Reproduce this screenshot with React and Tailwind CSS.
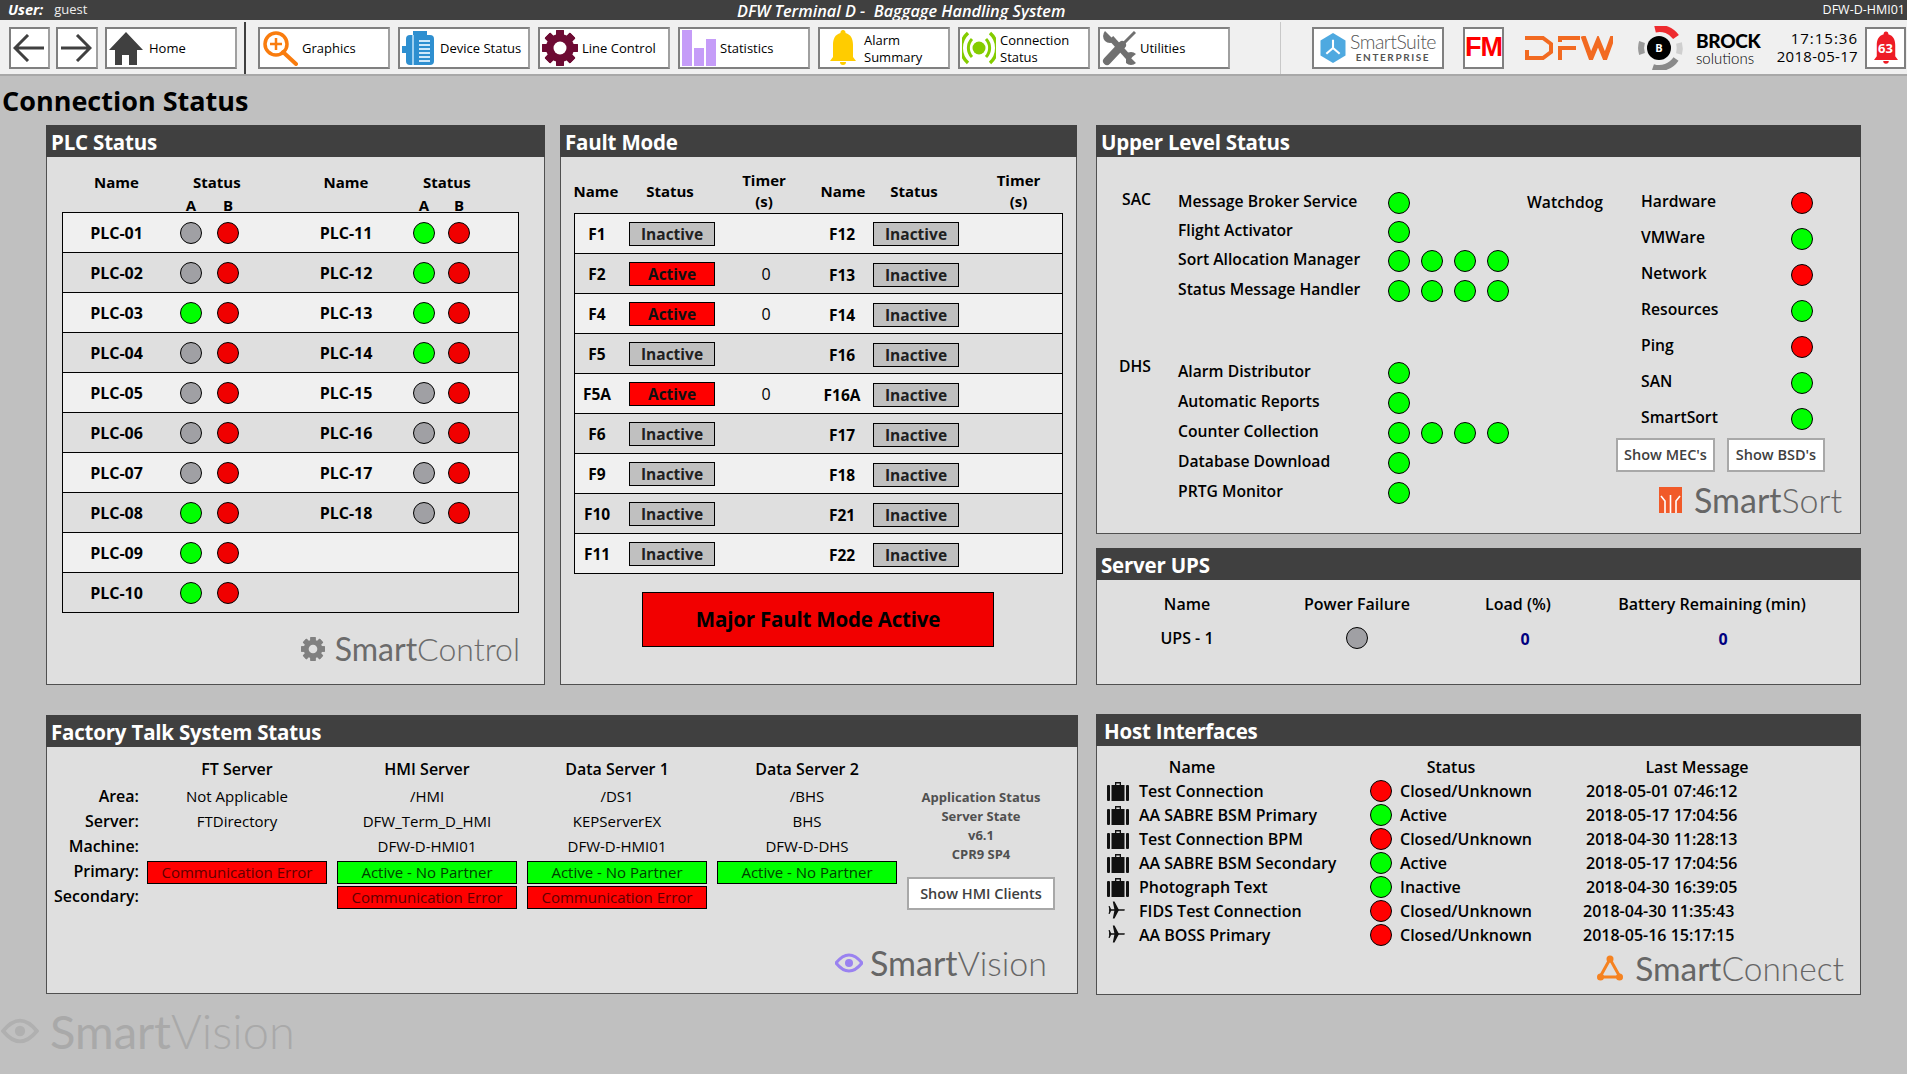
const font = "font-['Open_Sans','Noto_Sans',sans-serif]";

function Dot({ c, className = "" }) {
  const fill = c === "g" ? "bg-[#00ff00]" : c === "r" ? "bg-[#ff0000]" : c === "d" ? "bg-[#f00000]" : "bg-[#a0a0a4]";
  return <span className={`block w-[22px] h-[22px] rounded-full border border-black shrink-0 ${fill} ${className}`} />;
}

function Panel({ title, className = "", titleClass = "pl-[5px]", children }) {
  return (
    <section className={`flex flex-col bg-[#dfdfdf] border border-t-0 border-[#505050] ${className}`}>
      <h2 className={`h-[32px] shrink-0 -mx-px bg-[#404040] text-white text-[20.5px] leading-[34px] font-bold tracking-[-0.2px] ${titleClass}`}>{title}</h2>
      <div className="flex-1 flex flex-col min-h-0">{children}</div>
    </section>
  );
}

function ToolBtn({ icon, label, w = "w-[132px]" }) {
  return (
    <button className={`${w} h-[42px] shrink-0 flex items-center gap-[4px] bg-white border-2 border-[#808080] border-r-[#a0a0a0] px-[2px] text-[13px] leading-[17px] text-black text-left font-normal`}>
      {icon}
      {label && <span className="whitespace-pre-line pt-[2px]">{label}</span>}
    </button>
  );
}

function Btn({ className = "", children }) {
  return (
    <button className={`bg-white border-2 border-[#a8a8a8] text-[14.5px] font-semibold text-[#404040] flex items-center justify-center whitespace-nowrap ${className}`}>{children}</button>
  );
}

const HomeIcon = () => (
  <svg width="34" height="34" viewBox="0 0 34 34" className="shrink-0 mr-[2px]"><path d="M17 1 L34 19 H28 V34 H20 V24 H13 V34 H6 V19 H0 Z" fill="#404040" /></svg>
);
const GraphicsIcon = () => (
  <svg width="36" height="36" viewBox="0 0 36 36" className="shrink-0"><circle cx="14" cy="14" r="11" fill="none" stroke="#f97c0e" strokeWidth="3.5" /><path d="M21 22 L34 34" stroke="#f97c0e" strokeWidth="4" strokeLinecap="round" /><path d="M14 8 V20 M8 14 H20" stroke="#f97c0e" strokeWidth="2.5" /></svg>
);
const DeviceIcon = () => (
  <svg width="34" height="36" viewBox="0 0 34 36" className="shrink-0">
    <rect x="11" y="1" width="14" height="5" fill="#2e8fd0" /><rect x="4" y="5" width="28" height="30" rx="4" fill="#2e8fd0" /><rect x="0" y="16" width="4" height="7" fill="#2e8fd0" />
    <rect x="10" y="5" width="2" height="30" fill="#9fd0f0" />
    {[10, 14, 18, 22, 26, 30].map((y) => <rect key={y} x="17" y={y} width="11" height="2" fill="#cfe8fa" />)}
  </svg>
);
const GearIcon = ({ color = "#6d0a33", size = 36, hole = "#fff" }) => (
  <svg width={size} height={size} viewBox="0 0 36 36" className="shrink-0">
    <g fill={color}>{[0, 45, 90, 135, 180, 225, 270, 315].map((a) => <rect key={a} x="14" y="0" width="8" height="36" rx="1" transform={`rotate(${a} 18 18)`} />)}<circle cx="18" cy="18" r="14" /></g>
    <circle cx="18" cy="18" r="6.5" fill={hole} />
  </svg>
);
const StatsIcon = () => (
  <svg width="34" height="36" viewBox="0 0 34 36" className="shrink-0"><g fill="#c59cf8"><rect x="0" y="0" width="10" height="36" /><rect x="12" y="18" width="10" height="18" /><rect x="24" y="9" width="10" height="27" /></g></svg>
);
const BellIcon = ({ color = "#ffcc00", w = 26, h = 36 }) => (
  <svg width={w} height={h} viewBox="0 0 26 36" className="shrink-0"><path d="M13 0 a2.5 2.5 0 0 1 2.5 3 C21 4.5 23 9 23 15 V27 L26 31 H0 L3 27 V15 C3 9 5 4.5 10.5 3 A2.5 2.5 0 0 1 13 0 Z M10 32 H16 A3 3 0 0 1 10 32 Z" fill={color} /></svg>
);
const SignalIcon = () => (
  <svg width="34" height="34" viewBox="0 0 34 34" className="shrink-0" fill="none" stroke="#84cc00" strokeWidth="3"><circle cx="17" cy="17" r="6.5" fill="#84cc00" stroke="none" /><path d="M10 8 A13 13 0 0 0 10 26 M24 8 A13 13 0 0 1 24 26" /><path d="M6 2 A20 20 0 0 0 6 32 M28 2 A20 20 0 0 1 28 32" strokeWidth="3.5" /></svg>
);
const ToolsIcon = () => (
  <svg width="34" height="36" viewBox="0 0 34 36" className="shrink-0" fill="none" stroke="#707070">
    <path d="M33 2 L22 13" strokeWidth="3" />
    <path d="M20 15 L5 31" strokeWidth="8" strokeLinecap="round" />
    <path d="M9 8 L28 29" strokeWidth="6" />
    <path d="M3 1 A7.5 7.5 0 0 0 3 11 A7 7 0 0 0 13 11 L8 6 Z" fill="#707070" stroke="none" />
    <path d="M24 33 A7 7 0 0 0 34 33 L29 28 L34 24 A7.5 7.5 0 0 0 24 24 Z" fill="#707070" stroke="none" />
  </svg>
);
const ArrowIcon = ({ flip }) => (
  <svg width="32" height="28" viewBox="0 0 32 28" className={flip ? "-scale-x-100" : ""} fill="none" stroke="#404040" strokeWidth="3"><path d="M31 14 H2 M15 1 L2 14 L15 27" /></svg>
);
const Case = () => (
  <svg width="22" height="20" viewBox="0 0 22 20" className="shrink-0" fill="#111"><path d="M8 4 V1 H14 V4 H12.7 V2.5 H9.3 V4 Z" /><rect x="0" y="4" width="3" height="16" rx="1" /><rect x="4.5" y="4" width="13" height="16" /><rect x="19" y="4" width="3" height="16" rx="1" /></svg>
);
const PlaneIcon = () => (
  <svg width="18" height="18" viewBox="0 0 18 18" className="shrink-0 -mt-[2px] ml-[1px]" fill="#111"><path d="M1 8.3 H16 Q18 9 16 9.7 H1 Z" /><path d="M11 9 L6.5 0.5 H4.8 L6.5 9 L4.8 17.5 H6.5 Z" /><path d="M3.5 9 L1.6 5 H0.6 L1.4 9 L0.6 13 H1.6 Z" /></svg>
);

function Logo({ icon, a, b, size, className = "" }) {
  return (
    <div className={`flex items-center font-['Lato',sans-serif] ${className}`} style={{ fontSize: size }}>
      {icon}
      <span className="font-normal">{a}</span><span className="font-light">{b}</span>
    </div>
  );
}

function Toolbar() {
  return (
    <div className="h-[56px] bg-[#f0f0f0] border-b-2 border-[#a8a8a8] flex items-center pl-[9px] pt-px relative">
      <ToolBtn w="w-[41px]" icon={<ArrowIcon />} />
      <ToolBtn w="w-[42px] ml-[6px]" icon={<ArrowIcon flip />} />
      <ToolBtn w="w-[132px] ml-[7px]" icon={<HomeIcon />} label="Home" />
      <div className="w-[2px] h-[52px] bg-[#404040] ml-[7px] mr-[12px]" />
      <div className="flex gap-[8px]">
        <ToolBtn icon={<GraphicsIcon />} label="Graphics" />
        <ToolBtn icon={<DeviceIcon />} label="Device Status" />
        <ToolBtn icon={<GearIcon />} label="Line Control" />
        <ToolBtn icon={<StatsIcon />} label="Statistics" />
        <ToolBtn icon={<span className="pl-2 pr-1 flex"><BellIcon /></span>} label={"Alarm\nSummary"} />
        <ToolBtn icon={<SignalIcon />} label={"Connection\nStatus"} />
        <ToolBtn icon={<ToolsIcon />} label="Utilities" />
      </div>
      <div className="w-px h-[52px] bg-[#c8c8c8] ml-[50px] mr-[31px]" />
      <button className="w-[132px] h-[42px] shrink-0 bg-white border-2 border-[#808080] flex items-center pl-[6px] gap-[4px]">
        <svg width="26" height="30" viewBox="0 0 30 36" className="shrink-0"><path d="M15 0 L30 9 V27 L15 36 L0 27 V9 Z" fill="#4ea9e0" /><path d="M15 8 V18 M15 18 L7 25 M15 18 L23 25" stroke="#fff" strokeWidth="2.5" /></svg>
        <div className="flex flex-col items-center text-[#555] font-['Lato',sans-serif]">
          <span className="text-[19.5px] font-light tracking-[-0.5px] leading-[22px] -mb-[2px]">SmartSuite</span>
          <span className="text-[10px] tracking-[1.6px] font-bold leading-[13px]">ENTERPRISE</span>
        </div>
      </button>
      <button className="w-[41px] h-[42px] ml-[19px] shrink-0 bg-white border-2 border-[#808080] flex items-center justify-center text-[#ff0000] text-[27px] font-bold font-['Liberation_Sans',sans-serif] tracking-[-1px]">FM</button>
      <svg width="88" height="24" viewBox="0 0 88 24" className="ml-[21px] shrink-0" fill="none" stroke="#f26a21">
        <path d="M0 2 H18 L26 8 V16 L18 22 H0" strokeWidth="4" />
        <path d="M2 14 V20" strokeWidth="4" />
        <path d="M33 2 H55 M33 12 H51" strokeWidth="4" />
        <path d="M35 2 V6 M35 12 V24" strokeWidth="4" />
        <path d="M58 0 L66 22 L73 5 L80 22 L88 0" strokeWidth="5" />
      </svg>
      <svg width="52" height="44" viewBox="0 0 52 44" className="ml-[23px] shrink-0" fill="none">
        <path d="M19 3 A20 20 0 0 1 40 11" stroke="#ee2b2f" strokeWidth="7" />
        <path d="M43 17 A20 20 0 0 1 43 28" stroke="#cfcfcf" strokeWidth="6" />
        <path d="M40 33 A20 20 0 0 1 17 41" stroke="#8a8a8a" strokeWidth="6" />
        <path d="M6 28 A20 20 0 0 1 6 16" stroke="#9a9a9a" strokeWidth="6" />
        <circle cx="23" cy="22" r="12" fill="#000" />
        <text x="23" y="26" textAnchor="middle" fill="#fff" fontSize="11" fontWeight="700">B</text>
      </svg>
      <div className="ml-[8px] w-[65px] shrink-0 flex flex-col font-['Lato',sans-serif] text-black">
        <span className="text-[19px] font-black tracking-[-0.3px] leading-[23px]">BROCK</span>
        <span className="text-[15px] font-light leading-[18px] -mt-[3px]">solutions</span>
      </div>
      <div className="w-[90px] ml-[7px] shrink-0 text-right text-[15px] leading-[21px] text-black whitespace-nowrap">
        <div className="tracking-[1px]">17:15:36</div><div className="tracking-[0.3px] -mt-[3px]">2018-05-17</div>
      </div>
      <button className="w-[41px] h-[42px] ml-[7px] shrink-0 bg-white border-2 border-[#808080] flex items-center justify-center relative">
        <BellIcon color="#ee1c25" w={24} h={34} />
        <span className="absolute inset-0 flex items-center justify-center pt-[3px] text-white text-[13px] font-bold">63</span>
      </button>
    </div>
  );
}

const plcRows = [
  ["PLC-01", "a", "PLC-11", "g"], ["PLC-02", "a", "PLC-12", "g"], ["PLC-03", "g", "PLC-13", "g"], ["PLC-04", "a", "PLC-14", "g"], ["PLC-05", "a", "PLC-15", "a"],
  ["PLC-06", "a", "PLC-16", "a"], ["PLC-07", "a", "PLC-17", "a"], ["PLC-08", "g", "PLC-18", "a"], ["PLC-09", "g"], ["PLC-10", "g"],
];
const plcCols = "grid grid-cols-[107px_42px_32px_48px_108px_48px_22px_1fr] items-center justify-items-center";

function PlcPanel() {
  return (
    <Panel title="PLC Status" className="w-[499px] h-[560px]">
      <div className="ml-[15px] w-[457px] mt-[13px] text-[15px] font-bold leading-[20px] relative">
        <div className={`${plcCols} h-[23px] px-px`}>
          <span>Name</span><span className="col-span-2 justify-self-start pl-[23px]">Status</span><span /><span>Name</span><span className="col-span-2 pl-[23px] justify-self-start">Status</span>
        </div>
        <div className={`${plcCols} h-[19px] px-px pt-[2px]`}>
          <span /><span>A</span><span>B</span><span /><span /><span>A</span><span>B</span>
        </div>
        <div className="border border-black border-b-0 bg-[#f0f0f0] text-[16px]">
          {plcRows.map((r, i) => (
            <div key={r[0]} className={`${plcCols} h-[40px] border-b border-black ${i % 2 ? "bg-[#dfdfdf]" : "bg-[#f0f0f0]"}`}>
              <span>{r[0]}</span><Dot c={r[1]} /><Dot c="d" /><span />
              {r[2] ? <span>{r[2]}</span> : <span />}
              {r[2] ? <Dot c={r[3]} /> : <span />}
              {r[2] ? <Dot c="d" /> : <span />}
            </div>
          ))}
        </div>
      </div>
      <Logo className="mt-auto mb-[11px] self-end mr-[24px] text-[#6b6b6b]" size={32} a="Smart" b="Control" icon={<span className="mr-[10px]"><GearIcon color="#808080" size={24} hole="#dfdfdf" /></span>} />
    </Panel>
  );
}

const faultRows = [
  ["F1", 0, "", "F12"], ["F2", 1, "0", "F13"], ["F4", 1, "0", "F14"], ["F5", 0, "", "F16"], ["F5A", 1, "0", "F16A"], ["F6", 0, "", "F17"], ["F9", 0, "", "F18"], ["F10", 0, "", "F21"], ["F11", 0, "", "F22"],
];
const faultCols = "grid grid-cols-[44px_106px_82px_70px_78px_1fr] items-center justify-items-center";

function FaultState({ on, className = "" }) {
  return (
    <span className={`w-[86px] h-[24px] border border-black flex items-center justify-center text-[15.5px] font-bold ${on ? "bg-[#ff0000] text-[#101010]" : "bg-[#c0c0c0] text-[#202020]"} ${className}`}>
      {on ? "Active" : "Inactive"}
    </span>
  );
}

function FaultPanel() {
  return (
    <Panel title="Fault Mode" className="w-[517px] h-[560px]">
      <div className="ml-[13px] w-[489px] mt-[12px] text-[15px] font-bold leading-[20px]">
        <div className={`${faultCols} h-[44px]`}>
          <span>Name</span><span className="-translate-x-[1px]">Status</span><span className="text-center leading-[21px] -translate-x-[1px]">Timer<br />(s)</span><span className="translate-x-[2px]">Name</span><span className="-translate-x-[1px]">Status</span><span className="text-center leading-[21px] translate-x-[10px]">Timer<br />(s)</span>
        </div>
        <div className="border border-black border-b-0 text-[15.5px]">
          {faultRows.map((r, i) => (
            <div key={r[0]} className={`${faultCols} h-[40px] border-b border-black ${i % 2 ? "bg-[#dfdfdf]" : "bg-[#f0f0f0]"}`}>
              <span>{r[0]}</span>
              <FaultState on={r[1]} />
              <span className="font-normal text-[16px]">{r[2]}</span>
              <span className={i > 0 ? "pt-[3px]" : ""}>{r[3]}</span>
              <FaultState on={false} className={i > 0 ? "mt-[3px]" : ""} />
            </div>
          ))}
        </div>
      </div>
      <div className="mt-[18px] ml-[81px] h-[55px] w-[352px] bg-[#f20000] border border-black flex items-center justify-center text-[20.5px] font-bold tracking-[-0.2px]">Major Fault Mode Active</div>
    </Panel>
  );
}

function StatusLine({ label, dots, h = "h-[30px]" }) {
  return (
    <div className={`flex items-center ${h}`}>
      <span className="w-[210px] -translate-y-[2px] whitespace-nowrap">{label}</span>
      <div className="flex gap-[11px]">{dots.map((d, i) => <Dot key={i} c={d} />)}</div>
    </div>
  );
}

function UpperPanel() {
  const sac = [["Message Broker Service", 1], ["Flight Activator", 1], ["Sort Allocation Manager", 4], ["Status Message Handler", 4]];
  const dhs = [["Alarm Distributor", 1], ["Automatic Reports", 1], ["Counter Collection", 4], ["Database Download", 1], ["PRTG Monitor", 1]];
  const wd = [["Hardware", "r"], ["VMWare", "g"], ["Network", "r"], ["Resources", "g"], ["Ping", "r"], ["SAN", "g"], ["SmartSort", "g"]];
  return (
    <Panel title="Upper Level Status" className="h-[409px]">
      <div className="flex text-[15.7px] font-semibold leading-[20px] pt-[31px] pl-[23px] h-full">
        <div className="w-[407px]">
          <div className="flex">
            <span className="w-[58px] pl-[2px] mt-[1px]">SAC</span>
            <div>{sac.map(([l, n]) => <StatusLine key={l} label={l} h="h-[29.4px]" dots={Array(n).fill("g")} />)}</div>
          </div>
          <div className="flex mt-[52px]">
            <span className="w-[58px] -ml-px mr-px -mt-[2px]">DHS</span>
            <div>{dhs.map(([l, n]) => <StatusLine key={l} label={l} dots={Array(n).fill("g")} />)}</div>
          </div>
        </div>
        <div className="w-[114px] pt-[4px]">Watchdog</div>
        <div className="flex-1 flex flex-col">
          {wd.map(([l, c]) => (
            <div key={l} className="flex items-center h-[36px] first:-mt-[3px]">
              <span className="w-[150px] -translate-y-[2px]">{l}</span><Dot c={c} />
            </div>
          ))}
          <div className="flex gap-[12px] -ml-[25px] mt-[1px]">
            <Btn className="w-[99px] h-[34px]">Show MEC's</Btn>
            <Btn className="w-[98px] h-[34px]">Show BSD's</Btn>
          </div>
          <Logo className="text-[#666] mt-[15px] ml-[18px] whitespace-nowrap" size={34} a="Smart" b="Sort" icon={
            <svg width="23" height="26" viewBox="0 0 23 26" className="mr-[12px]"><rect width="23" height="26" fill="#f15a29" /><path d="M6 26 V14 L2 9 M11.5 26 V8 M17 26 V14 L21 9" stroke="#fff" strokeWidth="1.6" fill="none" /></svg>
          } />
        </div>
      </div>
    </Panel>
  );
}

function UpsPanel() {
  return (
    <Panel title="Server UPS" className="h-[137px] mt-[14px]">
      <div className="grid grid-cols-[180px_160px_150px_1fr] text-[16px] font-semibold leading-[20px] pt-[14px] pr-[23px] justify-items-center whitespace-nowrap">
        <span>Name</span><span>Power Failure</span><span className="pl-[12px]">Load (%)</span><span>Battery Remaining (min)</span>
        <span className="mt-[14px]">UPS - 1</span>
        <span className="mt-[13px]"><Dot c="a" /></span>
        <span className="mt-[15px] pl-[26px] text-[#000080] font-bold">0</span>
        <span className="mt-[15px] pl-[22px] text-[#000080] font-bold">0</span>
      </div>
    </Panel>
  );
}

function Box({ kind, children }) {
  return (
    <div className={`h-[23px] w-[180px] border border-black flex items-center justify-center text-[15px] leading-none ${kind === "r" ? "bg-[#ff0000] text-[#600000]" : "bg-[#00ff00] text-[#004000]"}`}>{children}</div>
  );
}

function FactoryPanel() {
  const servers = [
    { name: "FT Server", area: "Not Applicable", server: "FTDirectory", machine: "", p: ["r", "Communication Error"], s: null },
    { name: "HMI Server", area: "/HMI", server: "DFW_Term_D_HMI", machine: "DFW-D-HMI01", p: ["g", "Active - No Partner"], s: ["r", "Communication Error"] },
    { name: "Data Server 1", area: "/DS1", server: "KEPServerEX", machine: "DFW-D-HMI01", p: ["g", "Active - No Partner"], s: ["r", "Communication Error"] },
    { name: "Data Server 2", area: "/BHS", server: "BHS", machine: "DFW-D-DHS", p: ["g", "Active - No Partner"], s: null },
  ];
  return (
    <Panel title="Factory Talk System Status" className="h-[279px] mt-[30px] relative">
      <div className="flex text-[15px] leading-[25px] pt-[10px] pl-[3px]">
        <div className="w-[89px] text-right font-semibold text-[16px] whitespace-nowrap">
          <div className="h-[25px]" /><div className="mt-[2px]">Area:</div><div>Server:</div><div>Machine:</div><div>Primary:</div><div>Secondary:</div>
        </div>
        <div className="flex gap-[10px] ml-[8px]">
          {servers.map((s) => (
            <div key={s.name} className="w-[180px] text-center">
              <div className="h-[25px] font-semibold text-[16px]">{s.name}</div>
              <div className="mt-[2px] h-[25px]">{s.area}</div>
              <div className="h-[25px]">{s.server}</div>
              <div className="h-[25px]">{s.machine}</div>
              <div className="mt-[2px]"><Box kind={s.p[0]}>{s.p[1]}</Box></div>
              {s.s && <div className="mt-[2px]"><Box kind={s.s[0]}>{s.s[1]}</Box></div>}
            </div>
          ))}
        </div>
        <div className="w-[148px] ml-[10px] text-center text-[13px] leading-[19px] font-bold text-[#505050] pt-[31px]">
          <div>Application Status</div><div>Server State</div><div>v6.1</div><div>CPR9 SP4</div>
          <Btn className="w-[148px] h-[33px] mt-[13px]">Show HMI Clients</Btn>
        </div>
      </div>
      <Logo className="mt-auto mb-[5px] self-end mr-[30px] text-[#666]" size={34} a="Smart" b="Vision" icon={
        <svg width="28" height="20" viewBox="0 0 28 20" className="mr-[7px]"><path d="M1 10 Q14 -6 27 10 Q14 26 1 10 Z" fill="none" stroke="#9a82f0" strokeWidth="3" /><circle cx="14" cy="10" r="4" fill="#9a82f0" /></svg>
      } />
    </Panel>
  );
}

function HostPanel() {
  const rows = [
    ["c", "Test Connection", "r", "Closed/Unknown", "2018-05-01 07:46:12"],
    ["c", "AA SABRE BSM Primary", "g", "Active", "2018-05-17 17:04:56"],
    ["c", "Test Connection BPM", "r", "Closed/Unknown", "2018-04-30 11:28:13"],
    ["c", "AA SABRE BSM Secondary", "g", "Active", "2018-05-17 17:04:56"],
    ["c", "Photograph Text", "g", "Inactive", "2018-04-30 16:39:05"],
    ["p", "FIDS Test Connection", "r", "Closed/Unknown", "2018-04-30 11:35:43"],
    ["p", "AA BOSS Primary", "r", "Closed/Unknown", "2018-05-16 15:17:15"],
  ];
  const cols = "grid grid-cols-[10px_22px_10px_231px_22px_8px_186px_1fr] items-center whitespace-nowrap";
  return (
    <Panel title="Host Interfaces" titleClass="pl-[8px]" className="h-[281px] mt-[29px]">
      <div className="text-[16px] font-semibold leading-[20px] pt-[11px]">
        <div className="grid grid-cols-[190px_328px_164px] justify-items-center h-[21px] whitespace-nowrap">
          <span>Name</span><span>Status</span><span>Last Message</span>
        </div>
        <div className="mt-px">
          {rows.map((r) => (
            <div key={r[1]} className={`${cols} h-[24px]`}>
              <span />
              {r[0] === "c" ? <Case /> : <PlaneIcon />}
              <span />
              <span>{r[1]}</span>
              <Dot c={r[2]} />
              <span />
              <span>{r[3]}</span>
              <span className={r[0] === "p" ? "-ml-[3px]" : ""}>{r[4]}</span>
            </div>
          ))}
        </div>
      </div>
      <Logo className="-mt-[4px] self-end mr-[16px] text-[#666]" size={33.5} a="Smart" b="Connect" icon={
        <svg width="26" height="26" viewBox="0 0 26 26" className="mr-[12px]"><path d="M13 4 L3 22 H23 Z" fill="none" stroke="#f58220" strokeWidth="3" /><circle cx="13" cy="4" r="3.5" fill="#f58220" /><circle cx="3.5" cy="22" r="3.5" fill="#f58220" /><circle cx="22.5" cy="22" r="3.5" fill="#f58220" /></svg>
      } />
    </Panel>
  );
}

export default function App() {
  return (
    <div className={`w-[1907px] h-[1074px] bg-[#c0c0c0] text-black overflow-hidden relative ${font}`}>
      <div className="h-[20px] bg-[#404040] text-white flex items-center text-[13px] relative">
        <span className="ml-[8px] text-[14.5px] font-bold italic">User:</span><span className="ml-[11px] text-[#eee]">guest</span>
        <span className="absolute left-[737px] top-[1px] leading-[20px] text-[16.3px] font-semibold italic whitespace-pre">DFW Terminal D -  Baggage Handling System</span>
        <span className="ml-auto mr-[2px] text-[12.5px]">DFW-D-HMI01</span>
      </div>
      <Toolbar />
      <h1 className="text-[27px] font-bold leading-[38px] pl-[2px] mt-[6px] h-[43px]">Connection Status</h1>
      <div className="flex pl-[46px]">
        <div className="w-[1032px]">
          <div className="flex gap-[15px]"><PlcPanel /><FaultPanel /></div>
          <FactoryPanel />
        </div>
        <div className="w-[765px] ml-[18px]">
          <UpperPanel />
          <UpsPanel />
          <HostPanel />
        </div>
      </div>
      <Logo className="mt-px text-[#a9a9a9]" size={47} a="Smart" b="Vision" icon={
        <svg width="38" height="26" viewBox="0 0 28 20" className="ml-[1px] mr-[11px]"><path d="M1 10 Q14 -6 27 10 Q14 26 1 10 Z" fill="none" stroke="#b0b0b0" strokeWidth="3" /><circle cx="14" cy="10" r="4" fill="#b0b0b0" /></svg>
      } />
    </div>
  );
}
